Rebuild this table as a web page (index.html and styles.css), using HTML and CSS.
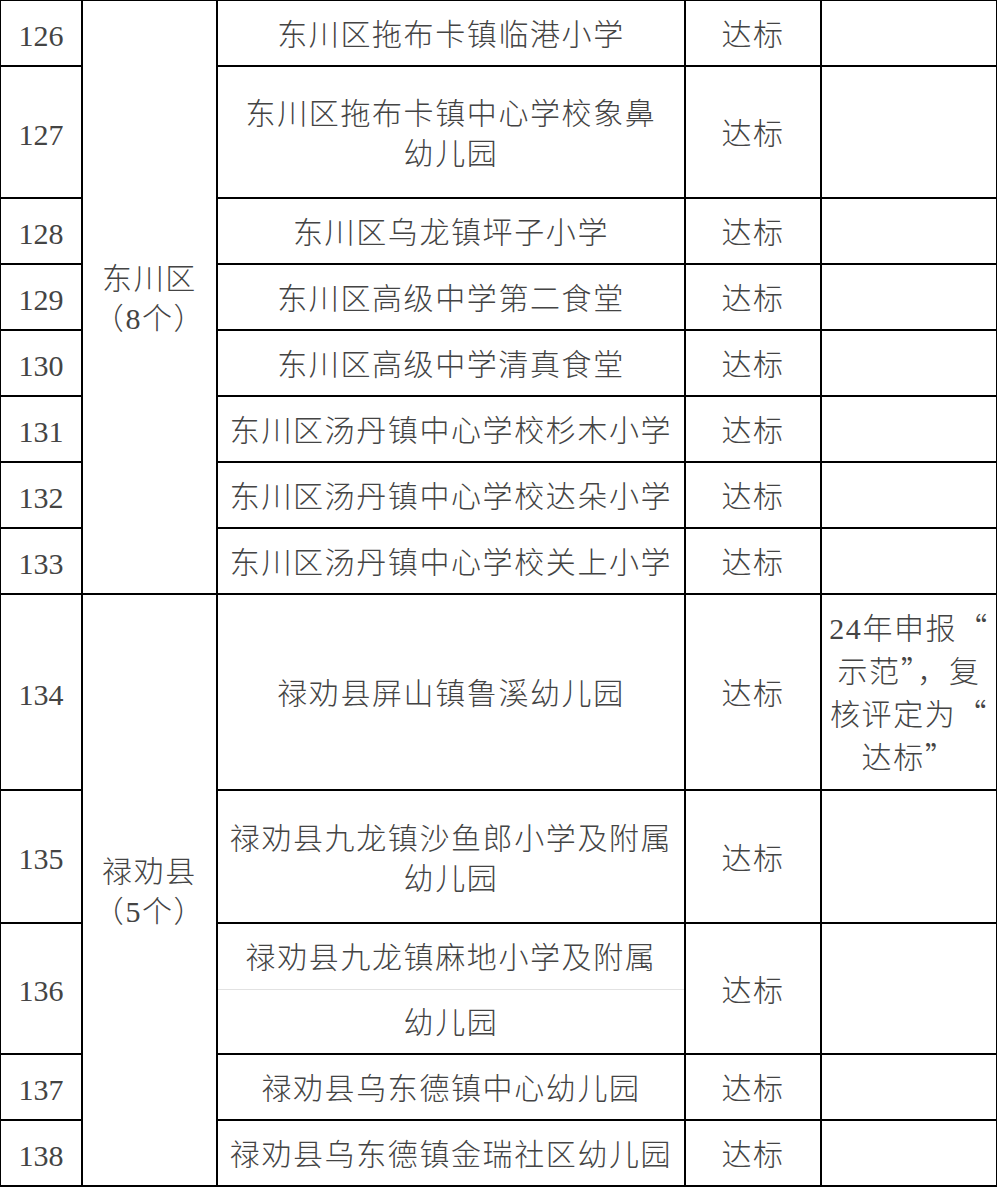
FILE: index.html
```html
<!DOCTYPE html>
<html lang="zh-CN">
<head>
<meta charset="utf-8">
<title>学校食堂评定表</title>
<link rel="stylesheet" href="styles.css">
</head>
<body>
<div class="sheet">
<table class="grid">
  <colgroup>
    <col class="c-no"><col class="c-area"><col class="c-name"><col class="c-res"><col class="c-note">
  </colgroup>
  <tbody>
    <tr class="h1"><td class="num">126</td><td class="area" rowspan="8"><span class="line">东川区</span><span class="line">（8个）</span></td><td>东川区拖布卡镇临港小学</td><td>达标</td><td></td></tr>
    <tr class="h2"><td class="num">127</td><td><span class="line">东川区拖布卡镇中心学校象鼻</span><span class="line">幼儿园</span></td><td>达标</td><td></td></tr>
    <tr class="h1"><td class="num">128</td><td>东川区乌龙镇坪子小学</td><td>达标</td><td></td></tr>
    <tr class="h1"><td class="num">129</td><td>东川区高级中学第二食堂</td><td>达标</td><td></td></tr>
    <tr class="h1"><td class="num">130</td><td>东川区高级中学清真食堂</td><td>达标</td><td></td></tr>
    <tr class="h1"><td class="num">131</td><td>东川区汤丹镇中心学校杉木小学</td><td>达标</td><td></td></tr>
    <tr class="h1"><td class="num">132</td><td>东川区汤丹镇中心学校达朵小学</td><td>达标</td><td></td></tr>
    <tr class="h1"><td class="num">133</td><td>东川区汤丹镇中心学校关上小学</td><td>达标</td><td></td></tr>
    <tr class="h3"><td class="num">134</td><td class="area" rowspan="6"><span class="line">禄劝县</span><span class="line">（5个）</span></td><td>禄劝县屏山镇鲁溪幼儿园</td><td>达标</td><td class="note"><span class="line">24年申报<span class="q">“</span></span><span class="line">示范<span class="q">”</span>，复</span><span class="line">核评定为<span class="q">“</span></span><span class="line">达标<span class="q">”</span></span></td></tr>
    <tr class="h2b"><td class="num">135</td><td><span class="line">禄劝县九龙镇沙鱼郎小学及附属</span><span class="line">幼儿园</span></td><td>达标</td><td></td></tr>
    <tr class="h1a"><td class="num" rowspan="2">136</td><td class="split-top">禄劝县九龙镇麻地小学及附属</td><td rowspan="2">达标</td><td rowspan="2"></td></tr>
    <tr class="h1b"><td class="split-bottom">幼儿园</td></tr>
    <tr class="h1"><td class="num">137</td><td>禄劝县乌东德镇中心幼儿园</td><td>达标</td><td></td></tr>
    <tr class="h1"><td class="num">138</td><td>禄劝县乌东德镇金瑞社区幼儿园</td><td>达标</td><td></td></tr>
  </tbody>
</table>
</div>
</body>
</html>
```

FILE: styles.css
```css
html, body {
  margin: 0;
  padding: 0;
  background: #ffffff;
}

.sheet {
  margin: -1px 0 0 -1px;
}

.grid {
  border-collapse: collapse;
  table-layout: fixed;
  width: 997px;
  font-family: "Liberation Serif", "Noto Sans CJK SC", serif;
  font-size: 30px;
  font-weight: 300;
  color: #444444;
}

.c-no { width: 82px; }
.c-area { width: 135px; }
.c-name { width: 468px; }
.c-res { width: 136px; }
.c-note { width: 176px; }

.grid td {
  border: 2px solid #000000;
  padding: 4px 10px 0;
  text-align: center;
  vertical-align: middle;
  letter-spacing: 1.6px;
  line-height: 40px;
  white-space: nowrap;
}

.grid td.num {
  letter-spacing: 0;
  padding: 5px 0 0;
  font-weight: 400;
}

.h1 { height: 66px; }
.h2 { height: 132px; }
.h2b { height: 133px; }
.h3 { height: 196px; }
.h1a { height: 66px; }
.h1b { height: 65px; }

.line {
  display: block;
}

.grid td.note {
  padding: 0 6px;
  line-height: 41px;
}

.q {
  font-family: "Noto Sans CJK SC", sans-serif;
  font-feature-settings: "fwid" 1;
}

.grid td.split-top {
  border-bottom: 1px solid #e2e2e2;
}

.grid td.split-bottom {
  border-top: 1px solid #e2e2e2;
}
```
